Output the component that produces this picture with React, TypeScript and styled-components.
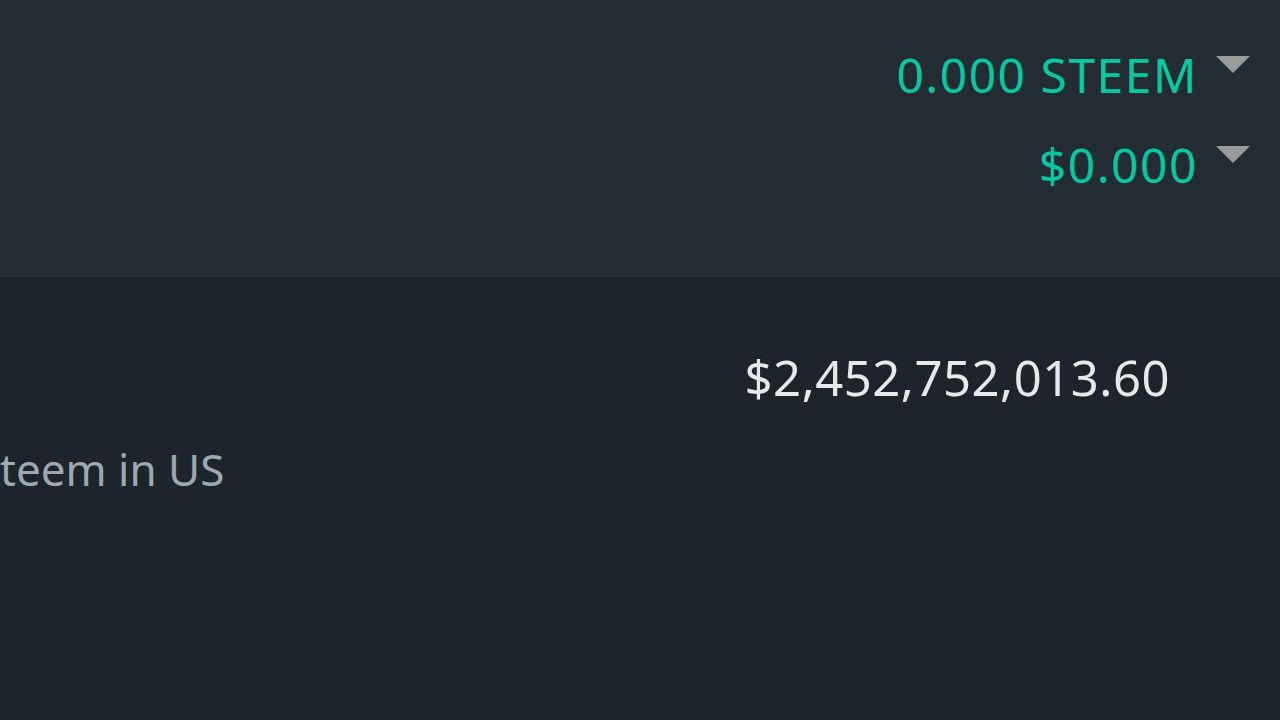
import React from 'react';
import styled, { createGlobalStyle } from 'styled-components';

const GlobalStyle = createGlobalStyle`
  html, body {
    margin: 0;
    padding: 0;
    background: #1e242b;
  }
  body {
    font-family: "Noto Sans", "Open Sans", sans-serif;
    overflow: hidden;
  }
`;

const Page = styled.div`
  width: 1280px;
  height: 720px;
  display: flex;
  flex-direction: column;
  background: #1e242b;
`;

const BalancePanel = styled.div`
  height: 277px;
  box-sizing: border-box;
  background: #232c33;
  display: flex;
  flex-direction: column;
  align-items: flex-end;
  gap: 42px;
  padding: 51px 30px 0 0;
`;

const BalanceRow = styled.div`
  display: flex;
  align-items: flex-start;
  gap: 18px;
`;

const BalanceAmount = styled.span`
  font-size: 48px;
  line-height: 48px;
  color: #07c8a3;
  letter-spacing: 1.5px;
  white-space: nowrap;
`;

const Caret = styled.span`
  width: 0;
  height: 0;
  margin-top: 5px;
  border-left: 17px solid transparent;
  border-right: 17px solid transparent;
  border-top: 17px solid #9a9a9a;
`;

const ValueRow = styled.div`
  display: flex;
  padding-top: 76px;
`;

const DescColumn = styled.div`
  width: 240px;
  flex-shrink: 0;
  padding-top: 94px;
`;

const Description = styled.span`
  font-size: 44px;
  line-height: 44px;
  color: #9ea8b1;
  white-space: nowrap;
`;

const ValueColumn = styled.div`
  flex: 1;
  display: flex;
  justify-content: flex-end;
  padding-right: 110px;
`;

const TotalValue = styled.span`
  font-size: 49px;
  line-height: 48px;
  color: #e6e8ea;
  letter-spacing: 0.5px;
  white-space: nowrap;
`;

const balances = ['0.000 STEEM', '$0.000'];

export default function App() {
  return (
    <Page>
      <GlobalStyle />
      <BalancePanel>
        {balances.map((b) => (
          <BalanceRow key={b}>
            <BalanceAmount>{b}</BalanceAmount>
            <Caret />
          </BalanceRow>
        ))}
      </BalancePanel>
      <ValueRow>
        <DescColumn>
          <Description>teem in US</Description>
        </DescColumn>
        <ValueColumn>
          <TotalValue>$2,452,752,013.60</TotalValue>
        </ValueColumn>
      </ValueRow>
    </Page>
  );
}
